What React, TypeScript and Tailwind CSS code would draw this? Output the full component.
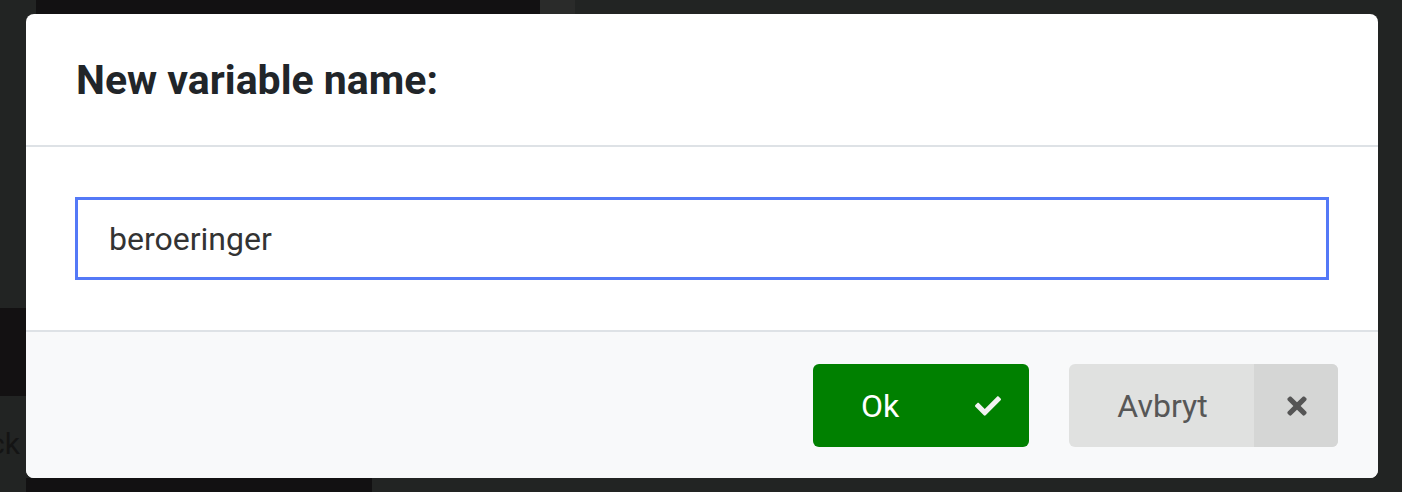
import React from "react";
import { FaCheck, FaTimes } from "react-icons/fa";

export default function App() {
  return (
    <div
      className="w-[1402px] h-[492px] bg-[#222423] flex flex-col overflow-hidden"
      style={{ fontFamily: "Roboto, 'Noto Sans', sans-serif" }}
    >
      {/* top strip of underlying page */}
      <div className="h-[14px] flex shrink-0">
        <div className="w-[36px]" />
        <div className="w-[504px] bg-[#121112]" />
        <div className="w-[35px] bg-[#2a2b2a]" />
      </div>
      <div className="flex h-[464px] shrink-0">
        {/* left sliver of underlying page */}
        <div className="w-[26px] shrink-0 flex flex-col overflow-hidden">
          <div className="h-[294px]" />
          <div className="h-[88px] bg-[#131112]" />
          <div className="h-[30px]" />
          <div className="flex justify-end pr-[6px] text-[30px] leading-[36px] text-[#141414] whitespace-nowrap">
            Back
          </div>
        </div>
        {/* modal */}
        <div className="w-[1352px] h-[464px] bg-white rounded-[8px] flex flex-col overflow-hidden">
          <div className="h-[133px] border-b-2 border-[#dee2e6] flex items-center pl-[50px] shrink-0">
            <h2 className="text-[41px] font-bold text-[#212529] leading-none mt-[2px]">
              New variable name:
            </h2>
          </div>
          <div className="h-[183px] flex items-center px-[49px] shrink-0">
            <div className="w-full h-[83px] border-[3px] border-[#5479f7] flex items-center pl-[31px]">
              <span className="text-[32px] text-[#333] leading-none mt-[1px]">beroeringer</span>
            </div>
          </div>
          <div className="flex-1 bg-[#f8f9fa] border-t-2 border-[#dee2e6] flex justify-end items-start pt-[32px] pr-[40px] gap-[40px]">
            <button className="w-[216px] h-[83px] rounded-[6px] bg-[#008000] flex items-stretch text-white">
              <span className="flex-1 flex items-center pl-[48px] text-[32px] leading-none">
                Ok
              </span>
              <span className="w-[100px] flex items-center justify-center pl-[18px]">
                <FaCheck className="w-[26px] h-[26px] text-[#f2f2f2]" />
              </span>
            </button>
            <button className="w-[269px] h-[83px] rounded-[6px] bg-[#e0e1e0] flex items-stretch text-[#575757] overflow-hidden">
              <span className="flex-1 flex items-center justify-center pl-[2px] text-[32px] leading-none">
                Avbryt
              </span>
              <span className="w-[84px] bg-[#d5d6d5] flex items-center justify-center pl-[2px]">
                <FaTimes className="w-[24px] h-[28px] text-[#555]" />
              </span>
            </button>
          </div>
        </div>
      </div>
      <div className="h-[14px] flex shrink-0">
        <div className="w-[26px]" />
        <div className="w-[346px] bg-[#121112]" />
      </div>
    </div>
  );
}
